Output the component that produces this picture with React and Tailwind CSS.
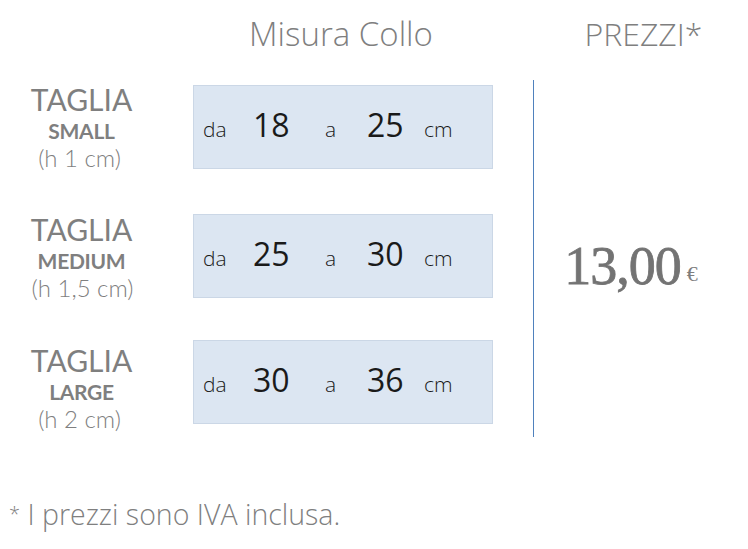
const ROWS = [
  { size: 'SMALL', h: '(h 1 cm)', from: '18', to: '25', mt: 'mt-[5px]', lmt: 'mt-[-2px]', hx: 'ml-[-4px]' },
  { size: 'MEDIUM', h: '(h 1,5 cm)', from: '25', to: '30', mt: 'mt-[45px]', lmt: 'mt-[-1px]', hx: 'ml-[2px]' },
  { size: 'LARGE', h: '(h 2 cm)', from: '30', to: '36', mt: 'mt-[42px]', lmt: 'mt-[4px]', hx: 'ml-[-4px]' },
];

const SizeRow = ({ row }) => (
  <div className={`flex ${row.mt}`}>
    <div className={`w-[193px] h-[84px] flex flex-col items-center text-[#7f7f7f] font-['Lato',sans-serif] ${row.lmt}`}>
      <div className="text-[30px] leading-[32px] pr-[30px] shrink-0">TAGLIA</div>
      <div className="text-[21px] font-bold leading-[26px] mt-[3px] pr-[30px] tracking-[-0.3px] shrink-0">{row.size}</div>
      <div className={`text-[24px] font-light leading-[28px] pr-[30px] shrink-0 ${row.hx}`}>{row.h}</div>
    </div>
    <div className="w-[300px] h-[84px] bg-[#dce6f2] border border-[#cbd7e6] flex items-baseline pt-[15px] pl-[9px] text-[#1a1a1a] font-['Open_Sans',sans-serif]">
      <span className="text-[21px] font-light w-[50px]">da</span>
      <span className="text-[32px] w-[72px]">{row.from}</span>
      <span className="text-[21px] font-light w-[42px]">a</span>
      <span className="text-[32px] w-[57px]">{row.to}</span>
      <span className="text-[21px] font-light">cm</span>
    </div>
  </div>
);

export default function App() {
  return (
    <div className="w-[748px] h-[549px] bg-white flex flex-col font-['Open_Sans',sans-serif] text-[#7f7f7f]">
      {/* header */}
      <div className="h-[80px] flex">
        <div className="w-[193px]" />
        <div className="w-[300px] flex justify-center pt-[14px] pr-[4px]">
          <span className="text-[33px] font-light leading-[40px] whitespace-nowrap">Misura Collo</span>
        </div>
        <div className="flex-1 flex justify-center pt-[14px] pl-[46px]">
          <span className="text-[32px] font-light leading-[40px]">PREZZI*</span>
        </div>
      </div>

      {/* body */}
      <div className="h-[357px] flex">
        <div className="w-[533px] flex flex-col">
          {ROWS.map((r) => (
            <SizeRow key={r.size} row={r} />
          ))}
        </div>
        <div className="w-px h-full bg-[#4f81bd]" />
        <div className="flex-1 flex items-center justify-center pt-[16px] pr-[20px]">
          <span className="font-['Liberation_Serif',serif] text-[54px] text-[#737373] tracking-[-1px] [-webkit-text-stroke:0.8px_#737373]">13,00</span>
          <span className="font-['Liberation_Serif',serif] text-[22px] ml-[6px] mt-[14px]">€</span>
        </div>
      </div>

      {/* footer */}
      <div className="flex-1 pl-[9px] pt-[60px]">
        <span className="text-[28.5px] font-light leading-[34px] whitespace-nowrap">
          <span className="text-[20px] align-[4px]">*</span> I prezzi sono IVA inclusa.
        </span>
      </div>
    </div>
  );
}
